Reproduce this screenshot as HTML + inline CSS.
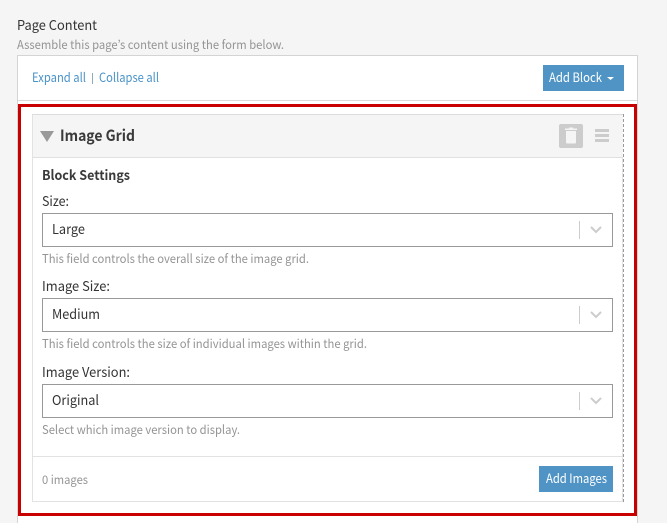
<!DOCTYPE html>
<html lang="en">
<head>
<meta charset="utf-8">
<title>Page Content</title>
<style>
html,body{margin:0;padding:0;width:667px;height:523px;overflow:hidden;background:#f5f5f5}
svg{display:block}
text{font-family:"Noto Sans CJK JP","Noto Sans CJK SC","Liberation Sans",sans-serif}
.l{font-size:13.5px;fill:#333}
.h{font-size:12px;fill:#949494}
.a{font-size:12.5px;fill:#4a93c8}
.v{font-size:13.5px;fill:#333}
.b{font-size:12.5px;fill:#fff}
.t{font-weight:700;fill:#3a3a3a}
.s{fill:#fff;stroke:#999;stroke-width:1}
.c{fill:none;stroke:#ccc;stroke-width:2}
</style>
</head>
<body>
<svg width="667" height="523" viewBox="0 0 667 523" xmlns="http://www.w3.org/2000/svg">
<rect width="667" height="523" fill="#f5f5f5"/>
<text class="l" x="17" y="30" textLength="80" lengthAdjust="spacingAndGlyphs">Page Content</text>
<text class="h" x="17" y="49" textLength="267" lengthAdjust="spacingAndGlyphs">Assemble this page’s content using the form below.</text>

<rect x="17.500" y="55.500" width="620" height="480" fill="#fff" stroke="#d4d4d4"/>
<rect x="18" y="100" width="619" height="1" fill="#d9d9d9"/>
<text class="a" x="32" y="82" textLength="54" lengthAdjust="spacingAndGlyphs">Expand all</text>
<rect x="92" y="73" width="1" height="11" fill="#8fa9bd"/>
<text class="a" x="99" y="82" textLength="60" lengthAdjust="spacingAndGlyphs">Collapse all</text>

<rect x="543" y="65" width="81" height="26" fill="#4f94c5"/>
<text class="b" x="549" y="82" textLength="53" lengthAdjust="spacingAndGlyphs">Add Block</text>
<polygon points="607,77 614,77 610.5,80" fill="#fff"/>

<rect x="19.500" y="105.500" width="616" height="409" fill="#fff" stroke="#c90000" stroke-width="3"/>

<rect x="32.500" y="114.500" width="590" height="387" fill="#fff" stroke="#e2e2e2"/>
<rect x="33" y="115" width="590" height="42" fill="#f5f5f5"/>
<rect x="33" y="157" width="590" height="1" fill="#e0e0e0"/>
<rect x="32" y="114" width="591" height="1" fill="#dcdcdc"/>
<line x1="623.500" y1="114" x2="623.500" y2="502" stroke="#999" stroke-width="1" stroke-dasharray="3 2"/>

<polygon points="40,131 54,131 47,142" fill="#999"/>
<text class="t" x="60" y="141" font-size="15.500" textLength="75" lengthAdjust="spacingAndGlyphs">Image Grid</text>

<rect x="559" y="124" width="24" height="24" rx="2" fill="#ccc"/>
<path d="M565 128.500h12v1.500h-12zM569 127.500h4v1h-4zM566 131h10v11.500a1 1 0 0 1-1 1h-8a1 1 0 0 1-1-1z" fill="#f5f5f5"/>
<rect x="595" y="129" width="14" height="3" fill="#ccc"/>
<rect x="595" y="134" width="14" height="3" fill="#ccc"/>
<rect x="595" y="139" width="14" height="3" fill="#ccc"/>

<text class="t" x="42" y="180" font-size="13.500" textLength="88" lengthAdjust="spacingAndGlyphs">Block Settings</text>

<text class="l" x="42" y="206" textLength="27" lengthAdjust="spacingAndGlyphs">Size:</text>
<rect class="s" x="42.500" y="213.500" width="570" height="33"/>
<text class="v" x="52" y="234" textLength="33" lengthAdjust="spacingAndGlyphs">Large</text>
<rect x="579" y="221" width="1" height="18" fill="#ccc"/>
<path class="c" d="M591 227l5 5 5-5"/>
<text class="h" x="42" y="263" textLength="267" lengthAdjust="spacingAndGlyphs">This field controls the overall size of the image grid.</text>

<text class="l" x="42" y="291" textLength="68" lengthAdjust="spacingAndGlyphs">Image Size:</text>
<rect class="s" x="42.500" y="298.500" width="570" height="33"/>
<text class="v" x="52" y="319" textLength="48" lengthAdjust="spacingAndGlyphs">Medium</text>
<rect x="579" y="306" width="1" height="18" fill="#ccc"/>
<path class="c" d="M591 312l5 5 5-5"/>
<text class="h" x="42" y="348" textLength="325" lengthAdjust="spacingAndGlyphs">This field controls the size of individual images within the grid.</text>

<text class="l" x="42" y="377" textLength="88" lengthAdjust="spacingAndGlyphs">Image Version:</text>
<rect class="s" x="42.500" y="384.500" width="570" height="33"/>
<text class="v" x="52" y="405" textLength="47" lengthAdjust="spacingAndGlyphs">Original</text>
<rect x="579" y="392" width="1" height="18" fill="#ccc"/>
<path class="c" d="M591 398l5 5 5-5"/>
<text class="h" x="42" y="434" textLength="198" lengthAdjust="spacingAndGlyphs">Select which image version to display.</text>

<rect x="33" y="456" width="590" height="1" fill="#e2e2e2"/>
<text class="h" x="42" y="484" textLength="46" lengthAdjust="spacingAndGlyphs">0 images</text>
<rect x="539" y="466" width="74" height="26" fill="#4f94c5"/>
<text class="b" x="546" y="483" textLength="61" lengthAdjust="spacingAndGlyphs">Add Images</text>
</svg>
</body>
</html>
